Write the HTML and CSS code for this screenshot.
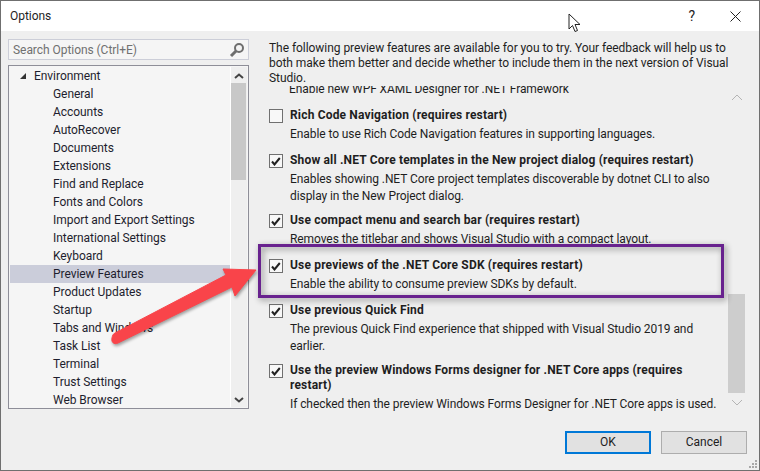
FILE: index.html
```html
<!DOCTYPE html>
<html lang="en">
<head>
<meta charset="utf-8">
<title>Options</title>
<link rel="stylesheet" href="styles.css">
</head>
<body>
<div class="window">
  <header class="titlebar">
    <span class="title">Options</span>
    <div class="title-actions">
      <span class="help">?</span>
      <svg class="close" width="11" height="11" viewBox="0 0 11 11"><path d="M.5.5l10 10M10.5.5l-10 10" stroke="#222" stroke-width="1" fill="none"/></svg>
    </div>
  </header>
  <div class="body">
    <aside class="left">
      <div class="search">
        <span class="search-text">Search Options (Ctrl+E)</span>
        <svg width="16" height="16" viewBox="0 0 16 16"><circle cx="10" cy="6" r="4" fill="#f4f4f4" stroke="#6e6e6e" stroke-width="2"/><path d="M7 9l-5 5" stroke="#6e6e6e" stroke-width="3"/></svg>
      </div>
      <div class="tree">
        <ul class="tree-list">
          <li class="tree-root"><span class="caret"></span>Environment</li>
          <li>General</li>
          <li>Accounts</li>
          <li>AutoRecover</li>
          <li>Documents</li>
          <li>Extensions</li>
          <li>Find and Replace</li>
          <li>Fonts and Colors</li>
          <li>Import and Export Settings</li>
          <li>International Settings</li>
          <li>Keyboard</li>
          <li class="selected">Preview Features</li>
          <li>Product Updates</li>
          <li>Startup</li>
          <li>Tabs and Windows</li>
          <li>Task List</li>
          <li>Terminal</li>
          <li>Trust Settings</li>
          <li>Web Browser</li>
        </ul>
        <div class="tree-scroll">
          <svg width="10" height="6" viewBox="0 0 10 6"><path d="M1 5l4-3.500L9 5" stroke="#444" stroke-width="2" fill="none"/></svg>
          <div class="tree-track"><div class="tree-thumb"></div></div>
          <svg width="10" height="6" viewBox="0 0 10 6"><path d="M1 1l4 3.500L9 1" stroke="#444" stroke-width="2" fill="none"/></svg>
        </div>
      </div>
    </aside>
    <main class="right">
      <p class="intro">The following preview features are available for you to try. Your feedback will help us to both make them better and decide whether to include them in the next version of Visual Studio.</p>
      <div class="features">
        <div class="feature-list">
          <div class="cut-line"><p class="desc">Enable new WPF XAML Designer for .NET Framework</p></div>
          <div class="feature feature-rich">
            <span class="check"></span>
            <div><h3>Rich Code Navigation (requires restart)</h3><p class="desc">Enable to use Rich Code Navigation features in supporting languages.</p></div>
          </div>
          <div class="feature feature-core">
            <span class="check"><svg width="10" height="9" viewBox="0 0 10 9"><path d="M1 4.500l2.500 3L8.800 1" stroke="#222" stroke-width="2" fill="none"/></svg></span>
            <div><h3>Show all .NET Core templates in the New project dialog (requires restart)</h3><p class="desc">Enables showing .NET Core project templates discoverable by dotnet CLI to also display in the New Project dialog.</p></div>
          </div>
          <div class="feature feature-compact">
            <span class="check"><svg width="10" height="9" viewBox="0 0 10 9"><path d="M1 4.500l2.500 3L8.800 1" stroke="#222" stroke-width="2" fill="none"/></svg></span>
            <div><h3>Use compact menu and search bar (requires restart)</h3><p class="desc">Removes the titlebar and shows Visual Studio with a compact layout.</p></div>
          </div>
          <div class="feature feature-sdk">
            <span class="check"><svg width="10" height="9" viewBox="0 0 10 9"><path d="M1 4.500l2.500 3L8.800 1" stroke="#222" stroke-width="2" fill="none"/></svg></span>
            <div><h3>Use previews of the .NET Core SDK (requires restart)</h3><p class="desc">Enable the ability to consume preview SDKs by default.</p></div>
          </div>
          <div class="feature feature-find">
            <span class="check"><svg width="10" height="9" viewBox="0 0 10 9"><path d="M1 4.500l2.500 3L8.800 1" stroke="#222" stroke-width="2" fill="none"/></svg></span>
            <div><h3>Use previous Quick Find</h3><p class="desc">The previous Quick Find experience that shipped with Visual Studio 2019 and earlier.</p></div>
          </div>
          <div class="feature">
            <span class="check"><svg width="10" height="9" viewBox="0 0 10 9"><path d="M1 4.500l2.500 3L8.800 1" stroke="#222" stroke-width="2" fill="none"/></svg></span>
            <div><h3>Use the preview Windows Forms designer for .NET Core apps (requires restart)</h3><p class="desc">If checked then the preview Windows Forms Designer for .NET Core apps is used.</p></div>
          </div>
        </div>
        <div class="main-scroll">
          <svg width="12" height="7" viewBox="0 0 12 7"><path d="M1 6l5-5 5 5" stroke="#b4b4b4" stroke-width="1" fill="none"/></svg>
          <div class="main-track"><div class="main-thumb"></div></div>
          <svg width="12" height="7" viewBox="0 0 12 7"><path d="M1 1l5 5 5-5" stroke="#b4b4b4" stroke-width="1" fill="none"/></svg>
        </div>
      </div>
    </main>
  </div>
  <footer class="actions">
    <button class="btn btn-default">OK</button>
    <button class="btn">Cancel</button>
  </footer>
  <svg class="grip" width="9" height="9" viewBox="0 0 9 9" fill="#a8a8a8"><rect x="6" y="0" width="2" height="2"/><rect x="3" y="3" width="2" height="2"/><rect x="6" y="3" width="2" height="2"/><rect x="0" y="6" width="2" height="2"/><rect x="3" y="6" width="2" height="2"/><rect x="6" y="6" width="2" height="2"/></svg>
  <div class="highlight"></div>
  <svg class="arrow" width="170" height="100" viewBox="0 0 170 100">
    <g class="arrow-shape">
      <path d="M10 94C6 96 3 93 4 89C4.500 86.500 5 85 7 84L118 26L115 20L148 21L127 47L124 38Z" fill="#f9444a" stroke="#f9444a" stroke-width="1" stroke-linejoin="round"/>
    </g>
  </svg>
  <svg class="cursor" width="14" height="20" viewBox="0 0 14 20"><path d="M1 1v15l3.500-3.500 2.500 6 2.500-1-2.500-6H12Z" fill="#fff" stroke="#222" stroke-width="1"/></svg>
</div>
</body>
</html>
```
FILE: styles.css
```css
* { box-sizing: border-box; }
html, body { margin: 0; padding: 0; }
body { width: 760px; height: 471px; overflow: hidden; background: #f0f0f0; }
.window {
  position: relative;
  width: 760px;
  height: 471px;
  border: 1px solid #6f6f6f;
  background: #efefef;
  display: flex;
  flex-direction: column;
  font: 12px/15px Roboto, "Noto Sans", sans-serif;
  letter-spacing: -0.05px;
  color: #1e1e1e;
}
.titlebar {
  height: 30px;
  background: #fff;
  display: flex;
  align-items: center;
  justify-content: space-between;
  padding: 1px 18px 0 9px;
  flex: none;
}
.title-actions { display: flex; align-items: center; gap: 35px; }
.help { font-size: 14px; }
.body { height: 400px; flex: none; display: flex; padding-top: 8px; }
.left { width: 241px; margin-left: 7px; flex: none; display: flex; flex-direction: column; gap: 5px; }
.search {
  height: 21px;
  background: #f5f5f5;
  border: 1px solid #ccced8;
  display: flex;
  align-items: center;
  justify-content: space-between;
  padding: 0 3px 0 4px;
  color: #707070;
}
.search-text { padding-top: 1px; }
.tree {
  height: 344px;
  flex: none;
  border: 1px solid #8e8e98;
  background: #f5f5f5;
  display: flex;
  padding: 1px;
}
.tree-list { list-style: none; margin: 0; padding: 0; flex: 1; }
.tree-list li { height: 18px; line-height: 18px; padding-left: 43px; color: #1e1e2e; }
.tree-list .tree-root { padding-left: 24px; position: relative; }
.tree-list .selected { background: #cbcdda; }
.caret {
  position: absolute;
  left: 10px;
  top: 6px;
  width: 0;
  height: 0;
  border-style: solid;
  border-width: 0 0 6px 6px;
  border-color: transparent transparent #333 transparent;
}
.tree-scroll { width: 16px; display: flex; flex-direction: column; align-items: center; justify-content: space-between; padding: 6px 0 4px; background: #efefef; box-shadow: -1px 0 #fff; }
.tree-track { flex: 1; width: 100%; margin-top: 4px; }
.tree-thumb { height: 97px; background: #c8c8c8; width: 15px; }
.right { flex: 1; display: flex; flex-direction: column; padding-left: 20px; min-width: 0; }
.intro { margin: 0; width: 464px; padding-top: 2px; line-height: 15px; height: 47px; }
.features { flex: 1; display: flex; min-height: 0; }
.feature-list { width: 459px; flex: none; height: 335px; overflow: hidden; }
.cut-line { height: 12px; overflow: hidden; position: relative; }
.cut-line .desc { margin-top: -5px; padding-left: 20px; }
.feature { display: flex; gap: 7px; }
.feature > div { width: 434px; flex: none; }
.check {
  width: 14px;
  height: 14px;
  flex: none;
  background: #f8f8f8;
  border: 1px solid #707070;
  display: flex;
  align-items: center;
  justify-content: center;
  margin-top: 1px;
}
.feature h3 { margin: 0 0 3px; font-size: 12px; font-weight: 700; line-height: 15px; letter-spacing: 0.17px; }
.desc { margin: 0; line-height: 17px; letter-spacing: -0.08px; }
.feature-rich { margin-top: 10px; height: 45px; }
.feature-core { height: 60px; }
.feature-compact { height: 45px; }
.feature-sdk { height: 45px; }
.feature-find { height: 60px; }
.main-scroll { width: 17px; display: flex; flex-direction: column; align-items: center; padding-top: 8px; height: 320px; }
.main-track { flex: 1; width: 100%; position: relative; display: flex; flex-direction: column; justify-content: flex-end; padding-bottom: 6px; }
.main-thumb { height: 99px; background: #cdcdcd; }
.actions { flex: none; height: 39px; display: flex; justify-content: flex-end; gap: 10px; padding: 0 12px 0 0; }
.btn {
  width: 86px;
  height: 23px;
  background: #e1e1e1;
  border: 1px solid #adadad;
  font: inherit;
  color: #1e1e1e;
  padding: 0;
}
.btn-default { border: 2px solid #0078d7; }
.grip { position: absolute; right: 1px; bottom: 1px; }
.highlight {
  position: absolute;
  left: 257px;
  top: 243px;
  width: 466px;
  height: 54px;
  border: 3px solid #68228e;
  filter: drop-shadow(2px 2px 3px rgba(0,0,0,.45));
}
.arrow { position: absolute; left: 107px; top: 248px; }
.arrow-shape { filter: drop-shadow(1px 2px 1.500px rgba(0,0,0,.35)); }
.cursor { position: absolute; left: 567px; top: 12px; }
```
